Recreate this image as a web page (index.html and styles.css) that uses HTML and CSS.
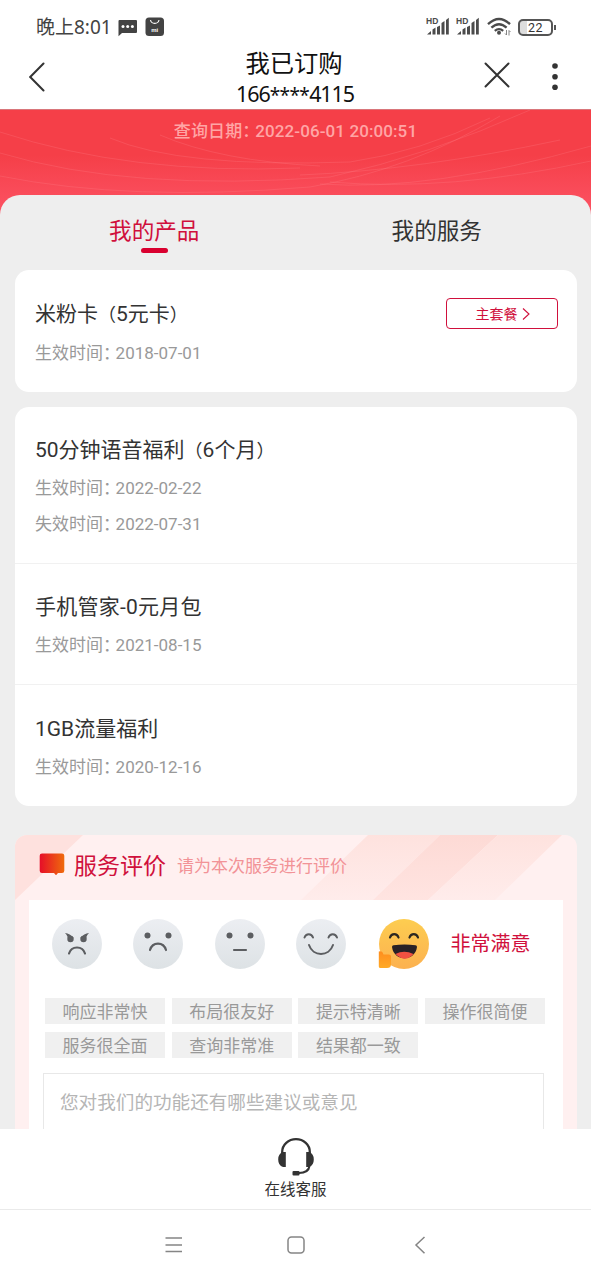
FILE: index.html
```html
<!DOCTYPE html>
<html lang="zh-CN">
<head>
<meta charset="utf-8">
<title>我已订购</title>
<link rel="stylesheet" href="styles.css">
</head>
<body>
<div class="phone">
  <div class="status">
    <span class="clock">晚上8:01</span>
    <svg class="msg" width="19" height="18" viewBox="0 0 19 18"><path d="M1 1h17q1 0 1 1v11q0 1-1 1H4l-3.500 3.200V2q0-1 1-1z" fill="#434343"/><g fill="#fff"><circle cx="5" cy="7.500" r="1.500"/><circle cx="9.700" cy="7.500" r="1.500"/><circle cx="14.400" cy="7.500" r="1.500"/></g></svg>
    <svg class="mi" width="20" height="20" viewBox="0 0 20 20"><rect x=".5" y=".5" width="18.500" height="18.500" rx="3.500" fill="#434343"/><path d="M5.500 3c.8 4.500 7.700 4.500 8.500 0" fill="none" stroke="#fff" stroke-width="1.100"/><text x="9.800" y="14.500" text-anchor="middle" class="mi-text">mi</text></svg>
    <div class="indicators">
      <svg width="24" height="20" viewBox="0 0 24 20"><text x="0" y="7" class="hd">HD</text><g fill="#4b4b4b"><path d="M1 17.500l4-3.500v3.500zM6.500 12.500l3-2v7h-3zM11 10l3-1.500v9h-3zM15.500 6l3-2v13.500h-3zM20 3l2.800-2.200v16.700H20z"/></g></svg>
      <svg class="sig2" width="24" height="20" viewBox="0 0 24 20"><text x="0" y="7" class="hd">HD</text><g fill="#4b4b4b"><path d="M1 17.500l4-3.500v3.500zM6.500 12.500l3-2v7h-3zM11 10l3-1.500v9h-3zM15.500 6l3-2v13.500h-3zM20 3l2.800-2.200v16.700H20z"/></g></svg>
      <svg class="wifi" width="25" height="20" viewBox="0 0 25 20"><g fill="none" stroke="#4b4b4b" stroke-width="2.300"><path d="M1 7.200q11-10.500 22 0M4.400 10.700q7.600-7 15.200 0M7.800 13.900q4.200-3.600 8.400 0"/></g><circle cx="12" cy="15.800" r="2" fill="#4b4b4b"/><path d="M19.500 13v5l-1.500-1.500M22 18.500v-5l1.500 1.500" fill="none" stroke="#777" stroke-width=".9"/></svg>
      <div class="battery"><span>22</span></div><i class="tip"></i>
    </div>
  </div>

  <header class="head">
    <svg class="back" width="17" height="30" viewBox="0 0 17 30"><path d="M14.500 1.500L1.200 15l13.300 13.500" fill="none" stroke="#333" stroke-width="2" stroke-linecap="round"/></svg>
    <div class="title"><h1>我已订购</h1><p>166<span class="mask">****</span>4115</p></div>
    <div class="head-actions">
      <svg width="26" height="26" viewBox="0 0 26 26"><path d="M1.500 1.500l23 23M24.500 1.500l-23 23" stroke="#333" stroke-width="2" stroke-linecap="round"/></svg>
      <svg width="6" height="28" viewBox="0 0 6 28"><g fill="#333"><circle cx="3" cy="4" r="2.800"/><circle cx="3" cy="14.800" r="2.800"/><circle cx="3" cy="25.200" r="2.800"/></g></svg>
    </div>
  </header>

  <main class="content">
    <section class="hero">
      <svg class="waves" width="591" height="120" viewBox="0 0 591 120"><g fill="none" stroke="#ff858c" stroke-opacity=".25" stroke-width="1"><path d="M0 22Q130 65 300 58"/><path d="M0 43Q130 82 330 67Q430 45 530 0"/><path d="M0 66Q130 92 310 77Q410 60 500 6"/><path d="M110 28Q180 58 350 52Q420 42 490 8"/><path d="M160 25Q220 51 320 56"/><path d="M320 74Q430 82 591 36"/><path d="M300 65Q420 60 560 30"/><path d="M330 72Q450 82 591 51"/></g></svg>
      <p class="query">查询日期<span class="colon">：</span>2022-06-01 20:00:51</p>
    </section>

    <div class="panel">
      <nav class="tabs">
        <div class="tab active">我的产品</div>
        <div class="tab">我的服务</div>
      </nav>

      <section class="card">
        <div class="item first">
          <h2>米粉卡<span class="paren">（</span>5元卡<span class="paren">）</span></h2>
          <p>生效时间<span class="colon">：</span>2018-07-01</p>
          <button class="plan">主套餐<svg width="8" height="14" viewBox="0 0 8 14"><path d="M1 1.500L7 7l-6 5.500" fill="none" stroke="#d0103c" stroke-width="1.100"/></svg></button>
        </div>
      </section>

      <section class="card">
        <div class="item">
          <h2>50分钟语音福利<span class="paren">（</span>6个月<span class="paren">）</span></h2>
          <p>生效时间<span class="colon">：</span>2022-02-22</p>
          <p>失效时间<span class="colon">：</span>2022-07-31</p>
        </div>
        <div class="item">
          <h2 class="wide">手机管家-0元月包</h2>
          <p>生效时间<span class="colon">：</span>2021-08-15</p>
        </div>
        <div class="item">
          <h2>1GB流量福利</h2>
          <p>生效时间<span class="colon">：</span>2020-12-16</p>
        </div>
      </section>

      <section class="review">
        <svg class="stripes" width="562" height="65" viewBox="0 0 562 65">
          <defs>
            <linearGradient id="sa" x1="0" y1="0" x2="0" y2="1"><stop offset="0" stop-color="#fddad5"/><stop offset="1" stop-color="#ffe4e1"/></linearGradient>
            <linearGradient id="sb" x1="0" y1="0" x2="0" y2="1"><stop offset="0" stop-color="#fee2de"/><stop offset="1" stop-color="#ffeceb"/></linearGradient>
          </defs>
          <path d="M0 0h68L0 65z" fill="#fee1de"/>
          <path d="M353 0l-67 65h72l67-65z" fill="url(#sb)"/>
          <path d="M425 0h58l-70 65h-55z" fill="url(#sa)"/>
          <path d="M483 0h64l-67 65h-67z" fill="url(#sb)"/>
        </svg>
        <div class="review-head">
          <svg width="26" height="23" viewBox="0 0 26 23"><defs><linearGradient id="bg"><stop stop-color="#e60e29"/><stop offset="1" stop-color="#ef6b0c"/></linearGradient></defs><path d="M3 .5h20q2.300 0 2.300 2.300v15q0 2.300-2.300 2.300h-4l-2 2.200-2-2.200H3Q.7 20.100.7 17.800v-15Q.7.500 3 .5z" fill="url(#bg)"/></svg>
          <h3>服务评价</h3><span>请为本次服务进行评价</span>
        </div>
        <div class="review-body">
          <div class="faces">
            <svg width="50" height="50" viewBox="0 0 50 50"><defs><linearGradient id="gray" x1="0" y1="0" x2="0" y2="1"><stop stop-color="#eceef2"/><stop offset="1" stop-color="#dde2e5"/></linearGradient></defs><circle cx="25" cy="25" r="25" fill="url(#gray)"/><g fill="#5c5e61"><circle cx="18.500" cy="20" r="3.200"/><circle cx="31.500" cy="20" r="3.200"/><path d="M13 14q5 .5 8.700 5l-5.700 3q.5-4.500-3-8zM37 14q-5 .5-8.700 5l5.700 3q-.5-4.500 3-8z"/></g><path d="M17 34.500C19.500 26.500 30.500 26.500 33 34.500" fill="none" stroke="#5c5e61" stroke-width="2.200" stroke-linecap="round"/></svg>
            <svg width="50" height="50" viewBox="0 0 50 50"><circle cx="25" cy="25" r="25" fill="url(#gray)"/><g fill="#5c5e61"><circle cx="14.500" cy="16.500" r="3"/><circle cx="35.500" cy="16.500" r="3"/></g><path d="M17 31C19.500 22.500 30.500 22.500 33 31" fill="none" stroke="#5c5e61" stroke-width="2.200" stroke-linecap="round"/></svg>
            <svg width="50" height="50" viewBox="0 0 50 50"><circle cx="25" cy="25" r="25" fill="url(#gray)"/><g fill="#5c5e61"><circle cx="14.500" cy="16.500" r="3"/><circle cx="35.500" cy="16.500" r="3"/></g><path d="M19 31h12" stroke="#5c5e61" stroke-width="2.200" stroke-linecap="round"/></svg>
            <svg width="50" height="50" viewBox="0 0 50 50"><circle cx="25" cy="25" r="25" fill="url(#gray)"/><g fill="none" stroke="#5c5e61" stroke-width="2" stroke-linecap="round"><path d="M8.500 18.500c1.500-4.500 7-4.500 8.500 0M32.500 18.500c1.500-4.500 7-4.500 8.500 0M13 26C17 38 33 38 37 26"/></g></svg>
            <svg width="52" height="50" viewBox="0 0 52 50"><defs><linearGradient id="gold" x1="0" y1="0" x2="0" y2="1"><stop stop-color="#fdcd50"/><stop offset="1" stop-color="#fcb150"/></linearGradient><linearGradient id="hand" x1="0" y1="0" x2="0" y2="1"><stop stop-color="#ff8d1e"/><stop offset="1" stop-color="#ffaa27"/></linearGradient></defs><circle cx="26" cy="25" r="25" fill="url(#gold)"/><path d="M.8 32.500q3.500-1.500 4.700 3h5q3 0 2.500 3v7q0 3.500-4 3.500H2.500q-1.700 0-1.700-1.500z" fill="url(#hand)"/><g fill="none" stroke="#2c2720" stroke-width="2.200" stroke-linecap="round"><path d="M12 18.500c1.500-4.500 7-4.500 8.500 0M31.500 18.500c1.500-4.500 7-4.500 8.500 0"/></g><path d="M14 28q0-1.500 1.500-1.700Q26.500 24.500 37.500 26.300q1.500.2 1.500 1.700C37 43 16 43 14 28z" fill="#292126"/><path d="M17.500 35q8.500-4.500 18 0-8.500 9.500-18 0z" fill="#f25141"/></svg>
            <span class="rating">非常满意</span>
          </div>
          <div class="tags">
            <span>响应非常快</span><span>布局很友好</span><span>提示特清晰</span><span>操作很简便</span>
            <span>服务很全面</span><span>查询非常准</span><span>结果都一致</span>
          </div>
          <div class="feedback">您对我们的功能还有哪些建议或意见</div>
        </div>
      </section>
    </div>
  </main>

  <footer class="service">
    <svg width="38" height="38" viewBox="0 0 38 38"><path d="M5.200 16v-2a13.800 12.800 0 0 1 27.600 0v2" fill="none" stroke="#333" stroke-width="2.300"/><path d="M8.800 14H6Q1.200 15.500 1.200 21.500T6 29h2.800zM29.200 14H32q4.800 1.500 4.800 7.500T32 29h-2.800z" fill="#333"/><path d="M32.500 28q-1 7-10.500 7" fill="none" stroke="#333" stroke-width="2"/><rect x="15.500" y="33" width="7" height="4.500" rx="1" fill="#333"/></svg>
    <span>在线客服</span>
  </footer>
  <div class="sysnav">
    <svg width="18" height="18" viewBox="0 0 18 18"><path d="M.5 2h16.500M.5 9h16.500M.5 15.500h16.500" stroke="#858585" stroke-width="1.500"/></svg>
    <svg width="18" height="18" viewBox="0 0 18 18"><rect x="1" y="1" width="16" height="16" rx="3.500" fill="none" stroke="#858585" stroke-width="1.500"/></svg>
    <svg class="nav-back" width="12" height="18" viewBox="0 0 12 18"><path d="M10.500 1L2 9l8.500 8.300" fill="none" stroke="#858585" stroke-width="1.500"/></svg>
  </div>
</div>
</body>
</html>
```
FILE: styles.css
```css
* { box-sizing: border-box; }
body, h1, h2, h3, p { margin: 0; font-weight: 400; }
body { font-family: Roboto, "Noto Sans CJK SC", sans-serif; color: #333; background: #fff; }
svg { display: block; flex: none; }
.phone { width: 591px; height: 1280px; overflow: hidden; display: flex; flex-direction: column; }

.status { height: 48px; flex: none; display: flex; align-items: center; padding: 6px 35px 0 36px; }
.clock { font: 19px/24px "Noto Sans", "Noto Sans CJK SC", sans-serif; color: #434343; width: 82px; white-space: nowrap; }
.msg { margin-top: 2px; }
.mi { margin-left: 8px; }
.mi-text { font: bold 6px "Liberation Sans", sans-serif; fill: #fff; }
.hd { font: bold 8.5px "Liberation Sans", sans-serif; fill: #4b4b4b; }
.indicators { margin-left: auto; display: flex; align-items: center; }
.sig2 { margin-left: 6px; }
.wifi { margin-left: 7px; }
.battery { width: 35px; height: 17px; margin-left: 6px; border: 2px solid #555; border-radius: 5px; background: linear-gradient(90deg, #ddd 7px, #fff 7px); display: flex; align-items: center; justify-content: center; font-size: 12.5px; line-height: 13px; letter-spacing: .5px; color: #333; }
.tip { width: 2px; height: 5px; background: #555; margin-left: 1px; }

.head { height: 61px; flex: none; display: grid; grid-template-columns: 1fr 200px 1fr; padding: 0 33px 0 29px; }
.back { margin-top: 14px; }
.title { text-align: center; color: #111; padding-right: 1px; }
.title h1 { font-size: 24.3px; line-height: 31px; margin-right: -2px; }
.title p { font: 21.5px/28px "Noto Sans", sans-serif; letter-spacing: -1.1px; margin-top: 1px; margin-right: -4px; }
.mask { font-size: 19px; letter-spacing: -.6px; }
.head-actions { display: flex; justify-content: flex-end; gap: 42px; padding-top: 14px; }

.content { height: 1020px; flex: none; overflow: hidden; background: #eee; }
.hero { height: 120px; margin-bottom: -34px; border-top: 1px solid #d9767b; background: linear-gradient(#f53f48 0, #f53f48 38%, #fb5060 80%); position: relative; }
.waves { position: absolute; left: 0; top: 0; }
.query { position: relative; text-align: center; font-size: 17px; line-height: 42px; color: #ffa5a5; letter-spacing: .1px; font-weight: 500; }
.query .colon { letter-spacing: -4px; }
.colon { letter-spacing: -4.400px; }
.paren { font-size: 18px; }
.panel { position: relative; background: #eee; border-radius: 20px 20px 0 0; padding: 0 14px 0 15px; }
.tabs { height: 75px; margin: 0 -1px 0 -2px; display: grid; grid-template-columns: 1fr 1fr; font-size: 22.6px; line-height: 74px; text-align: center; }
.tab.active { color: #d0103c; display: flex; flex-direction: column; align-items: center; }
.tab.active::after { content: ""; width: 27px; height: 5px; border-radius: 3px; background: #d9002f; margin-top: -21px; }

.card { background: #fff; border-radius: 14px; margin-bottom: 15px; }
.item { padding: 27px 20px 21px; position: relative; }
.item:first-child h2 { margin-bottom: 4px; }
.item + .item { border-top: 1px solid #f1f1f1; padding: 27px 20px 21px; }
.item + .item h2 { margin-bottom: 4.500px; }
.item + .item:last-child { padding-top: 28px; }
.item h2 { font-size: 21px; line-height: 32px; }
.item h2.wide { letter-spacing: .25px; }
.item p { font-size: 17px; line-height: 35.5px; color: #999; }
.item.first { height: 122px; padding-top: 28px; }
.item.first h2 { margin-bottom: 5px; }
.plan { position: absolute; right: 19px; top: 28px; width: 112px; height: 31px; padding: 0 0 0 1px; display: flex; align-items: center; justify-content: center; gap: 4px; background: #fff; border: 1.500px solid #d0103c; border-radius: 4px; color: #d0103c; font: 14px/28px Roboto, "Noto Sans CJK SC", sans-serif; }

.review { position: relative; margin-top: 29px; background: #fff0f0; border-radius: 12px 12px 0 0; padding: 0 14px; overflow: hidden; }
.stripes { position: absolute; left: 0; top: 0; }
.review-head { position: relative; height: 65px; padding: 0 0 7px 10px; display: flex; align-items: center; }
.review-head h3 { font-size: 23px; color: #d0103c; margin-left: 9px; }
.review-head span { font-size: 17px; color: #f29397; margin-left: 11px; }
.review-body { position: relative; background: #fff; height: 240px; padding: 19px 14px 0; }
.faces { display: flex; margin-left: 8.500px; gap: 31.500px; height: 79px; }
.rating { font-size: 20px; line-height: 51px; color: #d0103c; margin-left: -10.500px; }
.tags { display: grid; grid-template-columns: repeat(4, 120px); column-gap: 6.700px; row-gap: 8px; padding-left: 2px; }
.tags span { height: 26px; background: #f0f0f0; color: #999; font-size: 17px; line-height: 29px; text-align: center; }
.feedback { width: 501px; height: 100px; margin-top: 15px; border: 1px solid #e8e8e8; padding-left: 16px; font-size: 18.600px; line-height: 59px; color: #b5b5b5; }

.service { height: 81px; flex: none; background: #fff; border-bottom: 1px solid #eaeaea; display: flex; flex-direction: column; align-items: center; padding-top: 9px; font-size: 15.500px; line-height: 28px; }
.sysnav { height: 70px; display: flex; align-items: center; padding-left: 165px; gap: 104px; }
.nav-back { margin-left: 5px; }
```
